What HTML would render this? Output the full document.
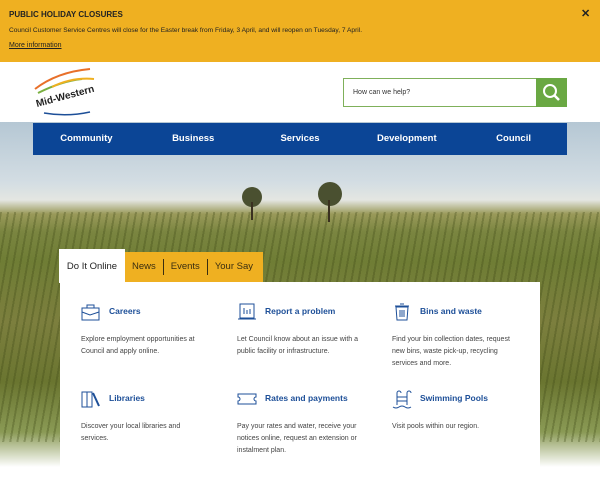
<!DOCTYPE html>
<html><head><style>
*{margin:0;padding:0;box-sizing:border-box}
body{width:600px;height:480px;overflow:hidden;font-family:"Liberation Sans",sans-serif;position:relative;background:#fff}
.ban{position:absolute;left:0;top:0;width:600px;height:62px;background:#efb021;color:#222}
.ban h1{position:absolute;left:9px;top:10px;font-size:8px;font-weight:bold}
.ban p{position:absolute;left:9px;top:27px;font-size:6.6px}
.ban a{position:absolute;left:9px;top:42px;font-size:7px;text-decoration:underline;color:#222}
.ban .x{position:absolute;left:581px;top:7px;font-size:11px;font-weight:bold}
.hero{position:absolute;left:0;top:122px;width:600px;height:345px;background:linear-gradient(#b5c7d4 0px,#d3dde3 60px,#e4e6e2 78px,#9a9a5a 92px,#7a8540 110px,#6f7d35 140px,#7c7f3e 200px,#6a7530 260px,#8a9a55 310px,#fff 345px)}
.vines{position:absolute;left:0;top:90px;width:600px;height:230px;background:repeating-linear-gradient(100deg,rgba(60,70,20,.3) 0 2px,transparent 2px 7px)}
.nav{position:absolute;left:33px;top:123px;width:534px;height:32px;background:#0b4596;display:flex;color:#fff;font-weight:bold;font-size:9.5px}
.nav div{flex:1;text-align:center;line-height:32px}
.srch{position:absolute;left:343px;top:78px;width:194px;height:29px;border:1.5px solid #7fb05a;background:#fff;font-size:7px;color:#333;padding:10px 9px}
.btn{position:absolute;left:536px;top:78px;width:31px;height:29px;background:#6aa843}
.tab0{position:absolute;left:59px;top:249px;width:66px;height:34px;background:#fff;font-size:9.5px;color:#222;text-align:center;line-height:36px}
.tabs{position:absolute;left:125px;top:252px;width:138px;height:30px;background:#efb021;font-size:9.5px;color:#3a2e10;display:flex;align-items:center}
.tabs span{padding:0 7px;border-left:1px solid #3a2e10;line-height:16px}
.tabs span:first-child{border:none}
.panel{position:absolute;left:60px;top:282px;width:480px;height:200px;background:#fff}
.it{position:absolute;width:150px}
.it h3{position:absolute;left:28px;top:0;font-size:8.5px;color:#1d4f98;white-space:nowrap}
.it p{position:absolute;left:0;top:28px;font-size:7px;line-height:12px;color:#444;width:150px;white-space:nowrap}
.it svg{position:absolute;left:0;top:-4px}
</style></head><body>
<div class="ban"><h1>PUBLIC HOLIDAY CLOSURES</h1><p>Council Customer Service Centres will close for the Easter break from Friday, 3 April, and will reopen on Tuesday, 7 April.</p><a>More information</a><span class="x">✕</span></div>
<svg style="position:absolute;left:32px;top:67px" width="66" height="52"><path d="M3 22 Q25 5 58 2" stroke="#e8702a" stroke-width="2" fill="none"/><path d="M6 26 Q30 14 50 12" stroke="#7ab040" stroke-width="2" fill="none"/><path d="M20 20 Q40 10 62 12" stroke="#efb021" stroke-width="2" fill="none"/><text x="5" y="40" font-size="10" font-weight="bold" fill="#222" transform="rotate(-15 5 40)" font-family="Liberation Sans">Mid-Western</text><path d="M12 46 Q35 50 58 45" stroke="#1d4f98" stroke-width="1.5" fill="none"/></svg>
<div class="hero"><div class="vines"></div>
<svg style="position:absolute;left:232px;top:60px" width="130" height="45"><circle cx="20" cy="15" r="10" fill="#4a5030"/><rect x="19" y="20" width="2" height="18" fill="#3a3020"/><circle cx="98" cy="12" r="12" fill="#4a5030"/><rect x="96" y="18" width="2" height="22" fill="#3a3020"/></svg></div>
<div class="nav"><div>Community</div><div>Business</div><div>Services</div><div>Development</div><div>Council</div></div>
<div class="srch">How can we help?</div>
<div class="btn"><svg width="31" height="29"><circle cx="14" cy="13" r="6" stroke="#fff" stroke-width="2" fill="none"/><path d="M18.5 17.5 L23 22" stroke="#fff" stroke-width="2.5"/></svg></div>
<div class="tab0">Do It Online</div>
<div class="tabs"><span>News</span><span>Events</span><span>Your Say</span></div>
<div class="panel"></div>
<div class="it" style="left:81px;top:306px"><svg width="20" height="20"><rect x="1" y="6" width="17" height="12" fill="none" stroke="#1d4f98"/><path d="M6 6V3h7v3M1 10l8 3 9-3" fill="none" stroke="#1d4f98"/></svg><h3>Careers</h3><p>Explore employment opportunities at<br>Council and apply online.</p></div>
<div class="it" style="left:237px;top:306px"><svg width="20" height="20"><rect x="3" y="2" width="14" height="14" fill="none" stroke="#1d4f98"/><path d="M1 17h18M7 6v6M10 8v4M13 7v5" stroke="#1d4f98"/></svg><h3>Report a problem</h3><p>Let Council know about an issue with a<br>public facility or infrastructure.</p></div>
<div class="it" style="left:392px;top:306px"><svg width="20" height="20"><path d="M4 5h12l-1 13H5z M3 4h14 M8 2h4" fill="none" stroke="#1d4f98"/><path d="M8 8v7M10 8v7M12 8v7" stroke="#1d4f98"/></svg><h3>Bins and waste</h3><p>Find your bin collection dates, request<br>new bins, waste pick-up, recycling<br>services and more.</p></div>
<div class="it" style="left:81px;top:393px"><svg width="20" height="20"><rect x="1" y="3" width="5" height="15" fill="none" stroke="#1d4f98"/><rect x="6" y="3" width="5" height="15" fill="none" stroke="#1d4f98"/><path d="M12 4l6 13" stroke="#1d4f98" stroke-width="2"/></svg><h3>Libraries</h3><p>Discover your local libraries and<br>services.</p></div>
<div class="it" style="left:237px;top:393px"><svg width="20" height="20"><path d="M1 5h18v3a2 2 0 0 0 0 4v3H1v-3a2 2 0 0 0 0-4z" fill="none" stroke="#1d4f98"/></svg><h3>Rates and payments</h3><p>Pay your rates and water, receive your<br>notices online, request an extension or<br>instalment plan.</p></div>
<div class="it" style="left:392px;top:393px"><svg width="22" height="22"><path d="M5 16V4a2 2 0 0 1 4 0M15 16V4a2 2 0 0 1 4 0M5 8h10M5 12h10M1 18q3 2 6 0t6 0 6 0" fill="none" stroke="#1d4f98"/></svg><h3>Swimming Pools</h3><p>Visit pools within our region.</p></div>
</body></html>
